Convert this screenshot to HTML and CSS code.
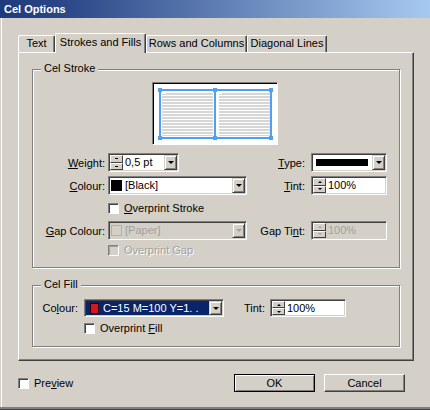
FILE: index.html
```html
<!DOCTYPE html>
<html lang="en">
<head>
    <meta charset="UTF-8">
    <title>Cel Options</title>
    <link rel="stylesheet" href="styles.css">
</head>
<body>
<div class="dialog">
    <!-- title bar -->
    <div class="titlebar">Cel Options</div>

    <!-- tabs -->
    <div class="tabs">
        <div class="tab tab-text">Text</div>
        <div class="tab tab-active">Strokes and Fills</div>
        <div class="tab tab-rows">Rows and Columns</div>
        <div class="tab tab-diag">Diagonal Lines</div>
    </div>

    <div class="panel">
        <!-- stroke group -->
        <div class="group group-stroke">
            <div class="group-title">Cel Stroke</div>
            <div class="preview">
                <svg width="122" height="59" viewBox="0 0 122 59">
                    <defs>
                        <pattern id="rows" width="3" height="3" patternUnits="userSpaceOnUse">
                            <rect width="3" height="2" fill="#d6d6d6"/>
                        </pattern>
                    </defs>
                    <rect x="8" y="8" width="51" height="44" fill="url(#rows)"/>
                    <rect x="65" y="8" width="51" height="44" fill="url(#rows)"/>
                    <rect x="8" y="8" width="4" height="2" fill="#fff"/>
                    <rect x="65" y="8" width="3" height="2" fill="#fff"/>
                    <rect x="6" y="6" width="111" height="48" fill="none" stroke="#509ff6" stroke-width="2"/>
                    <line x1="61" y1="6" x2="61" y2="54" stroke="#509ff6" stroke-width="2"/>
                    <g fill="#509ff6">
                        <rect x="4" y="4" width="4" height="4"/>
                        <rect x="59" y="4" width="4" height="4"/>
                        <rect x="115" y="4" width="4" height="4"/>
                        <rect x="4" y="52" width="4" height="4"/>
                        <rect x="59" y="52" width="4" height="4"/>
                        <rect x="115" y="52" width="4" height="4"/>
                    </g>
                </svg>
            </div>

            <div class="stroke-grid">
                <div class="lbl"><span><u>W</u>eight:</span></div>
                <div class="field field-weight">
                    <div class="spin mini"><b class="up"></b><b class="down"></b></div>
                    <div class="val">0,5 pt</div>
                    <div class="drop"></div>
                </div>
                <div class="lbl lbl-right"><span><u>T</u>ype:</span></div>
                <div class="field field-type">
                    <div class="line"></div>
                    <div class="drop"></div>
                </div>

                <div class="lbl"><span><u>C</u>olour:</span></div>
                <div class="field field-colour">
                    <div class="swatch"></div>
                    <div class="val">[Black]</div>
                    <div class="drop"></div>
                </div>
                <div class="lbl lbl-right"><span><u>T</u>int:</span></div>
                <div class="field field-tint">
                    <div class="spin"><b class="up"></b><b class="down"></b></div>
                    <div class="val">100%</div>
                </div>

                <div></div>
                <div class="check span3"><span class="box"></span><span><u>O</u>verprint Stroke</span></div>

                <div class="lbl"><span><u>G</u>ap Colour:</span></div>
                <div class="field field-colour off">
                    <div class="swatch swatch-off"></div>
                    <div class="val">[Paper]</div>
                    <div class="drop"></div>
                </div>
                <div class="lbl lbl-right"><span>Gap Ti<u>n</u>t:</span></div>
                <div class="field field-tint off">
                    <div class="spin"><b class="up"></b><b class="down"></b></div>
                    <div class="val">100%</div>
                </div>

                <div></div>
                <div class="check span3 check-top off"><span class="box"></span><span>Overprint Gap</span></div>
            </div>
        </div>

        <!-- fill group -->
        <div class="group group-fill">
            <div class="group-title">Cel Fill</div>
            <div class="fill-row">
                <div class="lbl fill-lbl"><span>Co<u>l</u>our:</span></div>
                <div class="field field-fill">
                    <div class="sel">
                        <div class="swatch swatch-red"></div>
                        <div class="val">C=15 M=100 Y=1. .</div>
                    </div>
                    <div class="drop"></div>
                </div>
                <div class="lbl tint-lbl"><span>Tint:</span></div>
                <div class="field field-tint field-short">
                    <div class="spin"><b class="up"></b><b class="down"></b></div>
                    <div class="val">100%</div>
                </div>
            </div>
            <div class="check fill-check"><span class="box"></span><span>Overprint <u>F</u>ill</span></div>
        </div>
    </div>

    <!-- bottom row -->
    <div class="footer">
        <div class="check"><span class="box"></span><span>Pre<u>v</u>iew</span></div>
        <div class="buttons">
            <button class="btn btn-default">OK</button>
            <button class="btn">Cancel</button>
        </div>
    </div>
</div>
</body>
</html>
```

FILE: styles.css
```css
body {
    margin: 0;
    background: #d4d0c8;
    color: #000;
    font: 11px "Liberation Sans", Arial, sans-serif;
}

u {
    text-underline-offset: 1px;
}

.dialog {
    width: 430px;
    height: 410px;
    box-sizing: border-box;
    border-bottom: 1px solid #404040;
    box-shadow: inset 0 -2px 0 #808080, inset 1px 0 0 #d4d0c8, inset 2px 0 0 #fff;
}

.titlebar {
    height: 18px;
    line-height: 18px;
    padding-left: 4px;
    color: #fff;
    font-weight: bold;
    background: linear-gradient(to right, #1f3a7b, #2a4686 14%, #a6c9f0);
}

/* tabs */
.tabs {
    display: flex;
    align-items: flex-end;
    height: 20px;
    margin: 15px 0 -1px;
    padding-left: 18px;
    position: relative;
    z-index: 1;
}

.tab {
    height: 17px;
    box-sizing: border-box;
    margin-bottom: 1px;
    border: 1px solid #fff;
    border-bottom: 0;
    border-right-color: #404040;
    border-radius: 2px 2px 0 0;
    box-shadow: inset -1px 0 0 #808080;
    text-align: center;
    line-height: 15px;
    white-space: nowrap;
}

.tab-text { width: 37px; }
.tab-rows { width: 101px; }
.tab-diag { width: 80px; }

.tab-active {
    width: 91px;
    height: 20px;
    margin-bottom: 0;
    background: #d4d0c8;
    line-height: 16px;
}

.panel {
    width: 396px;
    height: 309px;
    box-sizing: border-box;
    margin-left: 18px;
    padding-left: 13px;
    border: 1px solid;
    border-color: #fff #404040 #404040 #fff;
    box-shadow: inset -1px -1px 0 #808080;
}

/* group boxes */
.group {
    width: 368px;
    box-sizing: border-box;
    border: 1px solid #808080;
    box-shadow: inset 1px 1px 0 #fff, 1px 1px 0 #fff;
}

.group-stroke {
    height: 199px;
    margin-top: 16px;
}

.group-fill {
    height: 62px;
    margin-top: 17px;
}

.group-title {
    width: max-content;
    margin: -8px 0 0 8px;
    padding: 0 3px;
    line-height: 13px;
    background: #d4d0c8;
}

.preview {
    width: 126px;
    height: 63px;
    box-sizing: border-box;
    margin: 7px 0 0 119px;
    padding: 1px;
    border: 1px solid;
    border-color: #808080 #fff #fff #808080;
    box-shadow: inset 1px 1px 0 #000;
    background: #fff;
}

.preview svg {
    display: block;
}

.stroke-grid {
    display: grid;
    grid-template-columns: 74px 139px 64px 76px;
    grid-template-rows: 19px 19px 18px 19px 14px;
    row-gap: 4px;
    margin: 8px 0 0 1px;
}

.lbl {
    display: flex;
    align-items: center;
    justify-content: flex-end;
    padding-right: 3px;
    white-space: nowrap;
}

.lbl-right {
    padding-right: 6px;
}

.span3 {
    grid-column: 2 / 5;
}

/* fields */
.field {
    display: flex;
    box-sizing: border-box;
    height: 19px;
    padding: 1px;
    border: 1px solid;
    border-color: #808080 #fff #fff #808080;
    box-shadow: inset 1px 1px 0 #404040, inset -1px -1px 0 #d4d0c8;
    background: #fff;
}

.field-weight { width: 71px; }
.field-colour { width: 139px; }
.field-type { width: 76px; }
.field-tint { width: 76px; }
.field-fill { width: 140px; height: 18px; }
.field-short { height: 18px; }

.val {
    flex: 1;
    padding-left: 2px;
    line-height: 15px;
    white-space: nowrap;
    overflow: hidden;
}

.field-fill .val,
.field-short .val {
    line-height: 14px;
}

.spin {
    display: flex;
    flex-direction: column;
    width: 13px;
}

.spin b {
    flex: 1;
    display: flex;
    align-items: center;
    justify-content: center;
    box-sizing: border-box;
    background: #d4d0c8;
    border: 1px solid;
    border-color: #fff #404040 #404040 #fff;
}

.spin b::after {
    content: "";
    border: 2px solid transparent;
}

.spin .up::after {
    border-top-width: 0;
    border-bottom-color: #000;
}

.spin .down::after {
    border-bottom-width: 0;
    border-top-color: #000;
}

.spin.mini b::after {
    width: 3px;
    height: 1px;
    border: 0;
    background: #000;
}

.drop {
    display: flex;
    align-items: center;
    justify-content: center;
    width: 13px;
    box-sizing: border-box;
    background: #d4d0c8;
    border: 1px solid;
    border-color: #d4d0c8 #404040 #404040 #d4d0c8;
    box-shadow: inset 1px 1px 0 #fff, inset -1px -1px 0 #808080;
}

.drop::after {
    content: "";
    border-left: 3px solid transparent;
    border-right: 3px solid transparent;
    border-top: 3px solid #000;
}

.line {
    flex: 1;
    height: 7px;
    margin: 4px 4px 0 3px;
    background: #000;
}

.swatch {
    flex: none;
    width: 11px;
    height: 11px;
    box-sizing: border-box;
    margin: 2px 0 0 1px;
    background: #000;
}

.field-colour .val {
    padding-left: 3px;
}

.swatch-off {
    border: 1px solid #b0b0b0;
    background: transparent;
}

.sel {
    display: flex;
    flex: 1;
    background: #0a246a;
    color: #fff;
}

.swatch-red {
    width: 9px;
    margin: 2px 0 0 4px;
    background: #d4161e;
    border: 1px solid #300;
}

.sel .val {
    padding-left: 4px;
}

/* disabled */
.off {
    background: #d4d0c8;
}

.off .val {
    color: #a0a0a0;
}

.off .drop::after {
    border-top-color: #a0a0a0;
}

.off .spin .up::after { border-bottom-color: #a0a0a0; }
.off .spin .down::after { border-top-color: #a0a0a0; }

/* check boxes */
.check {
    display: flex;
    align-items: center;
    gap: 5px;
    white-space: nowrap;
}

.check-top {
    align-self: start;
}

.box {
    width: 11px;
    height: 11px;
    box-sizing: border-box;
    border: 1px solid;
    border-color: #808080 #fff #fff #808080;
    box-shadow: inset 1px 1px 0 #404040;
    background: #fff;
}

.check.off {
    color: #a0a0a0;
    text-shadow: 1px 1px 0 #fff;
}

.check.off .box {
    background: #d4d0c8;
    box-shadow: inset 1px 1px 0 #a0a0a0;
}

.fill-row {
    display: flex;
    height: 18px;
    margin-top: 8px;
}

.fill-lbl {
    width: 51px;
    box-sizing: border-box;
    padding-right: 6px;
}

.tint-lbl {
    width: 46px;
    box-sizing: border-box;
    padding-right: 5px;
}

.fill-check {
    margin: 5px 0 0 51px;
}

/* buttons */
.footer {
    display: flex;
    align-items: center;
    height: 18px;
    margin-top: 13px;
    padding: 0 25px 0 18px;
}

.buttons {
    display: flex;
    gap: 9px;
    margin-left: auto;
}

.btn {
    width: 81px;
    height: 18px;
    box-sizing: border-box;
    padding: 0;
    font: inherit;
    color: #000;
    background: #d4d0c8;
    border: 1px solid;
    border-color: #fff #404040 #404040 #fff;
    box-shadow: inset -1px -1px 0 #808080;
}

.btn-default {
    border-color: #000;
    box-shadow: inset 1px 1px 0 #fff, inset -1px -1px 0 #808080;
}
```
